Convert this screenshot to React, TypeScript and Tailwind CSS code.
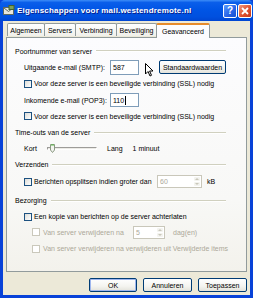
import React from "react";

const Check = ({ disabled = false }: { disabled?: boolean }) => (
  <div
    className={
      disabled
        ? "w-[8px] h-[8px] border border-[#CAC8BB] bg-white shrink-0"
        : "w-[8px] h-[8px] border border-[#1C5180] bg-[linear-gradient(135deg,#DCDCD7,#FFFFFF)] shrink-0"
    }
  />
);

const GroupHeader = ({ label, h }: { label: string; h: string }) => (
  <div className={`flex items-center ${h}`}>
    <span className="text-black whitespace-nowrap">{label}</span>
    <div className="flex-1 ml-[4px] h-[2px] border-t border-[#D0D0BF] border-b-white border-b" />
  </div>
);

const Btn = ({ label, w, def = false }: { label: string; w: string; def?: boolean }) => (
  <div
    className={`${w} h-[14px] rounded-[2px] border border-[#003C74] bg-[linear-gradient(to_bottom,#FFFFFF,#F4F4F0_60%,#E3E2DA)] flex items-center justify-center ${
      def ? "shadow-[inset_0_0_0_1px_#9EB6EE]" : ""
    }`}
  >
    <span className="text-black">{label}</span>
  </div>
);

const Spinner = ({ value, w }: { value: string; w: string }) => (
  <div className={`${w} h-[13px] border border-[#C9C7BA] bg-white flex items-center`}>
    <span className="flex-1 pl-[2px] text-[#ACA899]">{value}</span>
    <div className="w-[8px] h-full flex flex-col gap-px p-px">
      <div className="flex-1 bg-[#F3F3EF] rounded-[1px] flex items-center justify-center">
        <svg width="4" height="2" viewBox="0 0 4 2"><path d="M0 2 L2 0 L4 2Z" fill="#C9C7BA" /></svg>
      </div>
      <div className="flex-1 bg-[#F3F3EF] rounded-[1px] flex items-center justify-center">
        <svg width="4" height="2" viewBox="0 0 4 2"><path d="M0 0 L2 2 L4 0Z" fill="#C9C7BA" /></svg>
      </div>
    </div>
  </div>
);

export default function App() {
  return (
    <div className="w-[253px] h-[298px] bg-[#0842D8] flex flex-col overflow-hidden font-['Liberation_Sans',Arial,sans-serif] text-[7px] leading-[9px] relative">
      {/* Title bar */}
      <div className="h-[21px] shrink-0 flex items-center pl-[3px] pr-[1px] bg-[linear-gradient(to_bottom,#3D8DF7_0%,#0A5EEA_12%,#0055E5_45%,#0050DF_80%,#0046D2_100%)] rounded-t-[5px]">
        <svg width="12" height="11" viewBox="0 0 12 11" className="shrink-0">
          <rect x="0.5" y="2.5" width="10" height="7" fill="#E9E7DC" stroke="#5E6A60" />
          <path d="M1 3 L5.5 6.5 L10 3" fill="none" stroke="#5E6A60" />
          <rect x="6" y="0.5" width="5" height="4" fill="#7AA05A" stroke="#44632E" />
        </svg>
        <span className="ml-[2px] text-white font-bold text-[8px] leading-[10px] tracking-[0.18px] whitespace-nowrap [text-shadow:1px_1px_0_#0A1E8C]">
          Eigenschappen voor mail.westendremote.nl
        </span>
        <div className="flex-1" />
        <div className="w-[14px] h-[14px] rounded-[2px] border border-white bg-[linear-gradient(135deg,#5A9BFF,#2663E6_60%,#1A4FD0)] flex items-center justify-center">
          <span className="text-white font-bold text-[10px] leading-[10px]">?</span>
        </div>
        <div className="w-[14px] h-[14px] ml-px rounded-[2px] border border-white bg-[linear-gradient(135deg,#F09A7E,#E0512E_55%,#C53A1B)] flex items-center justify-center">
          <svg width="8" height="8" viewBox="0 0 8 8"><path d="M1 1 L7 7 M7 1 L1 7" stroke="white" strokeWidth="1.8" /></svg>
        </div>
      </div>

      {/* Body */}
      <div className="flex-1 mx-[3px] mb-[4px] bg-[#ECE9D8] flex flex-col px-[3px] pt-px pb-[3px]">
        {/* Tabs */}
        <div className="h-[15px] flex items-end pl-px relative z-10">
          {[
            ["Algemeen", "w-[38px]"],
            ["Servers", "w-[32px]"],
            ["Verbinding", "w-[42px]"],
            ["Beveiliging", "w-[41px]"],
          ].map(([t, w]) => (
            <div
              key={t}
              className={`${w} h-[13px] mb-px border border-b-0 border-[#919B9C] rounded-t-[2px] bg-[linear-gradient(to_bottom,#FFFFFF,#F0F0EA)] flex items-center justify-center mr-[-1px]`}
            >
              <span className="text-black">{t}</span>
            </div>
          ))}
          <div className="w-[54px] h-[15px] -mb-px border border-b-0 border-[#919B9C] border-t-[2px] border-t-[#E68B2C] rounded-t-[2px] bg-[#FCFCFE] flex items-center justify-center">
            <span className="text-black">Geavanceerd</span>
          </div>
        </div>

        {/* Panel */}
        <div className="h-[235px] shrink-0 border border-[#919B9C] bg-[linear-gradient(to_bottom,#FCFCFE,#F8F8F6_70%,#F3F2EC)] flex flex-col pt-[5px] pl-[8px] pr-[20px]">
          <GroupHeader label="Poortnummer van server" h="h-[16px]" />
          <div className="h-[16px] flex items-center pl-[9px]">
            <span className="w-[86px] text-black">Uitgaande e-mail (SMTP):</span>
            <div className="w-[29px] h-[15px] border border-[#7F9DB9] bg-white flex items-center pl-[2px]">
              <span className="text-black">587</span>
            </div>
            <div className="flex-1" />
            <Btn label="Standaardwaarden" w="w-[67px]" />
          </div>
          <div className="h-[17px] flex items-center pl-[9px] gap-[2px]">
            <Check />
            <span className="text-black whitespace-nowrap">Voor deze server is een beveiligde verbinding (SSL) nodig</span>
          </div>
          <div className="h-[16px] flex items-center pl-[9px]">
            <span className="w-[86px] text-black">Inkomende e-mail (POP3):</span>
            <div className="w-[29px] h-[14px] border border-[#7F9DB9] bg-white flex items-center pl-[2px]">
              <span className="text-black">110</span>
              <div className="w-px h-[9px] bg-black ml-px" />
            </div>
          </div>
          <div className="h-[16px] flex items-center pl-[9px] gap-[2px]">
            <Check />
            <span className="text-black whitespace-nowrap">Voor deze server is een beveiligde verbinding (SSL) nodig</span>
          </div>
          <GroupHeader label="Time-outs van de server" h="h-[17px]" />
          <div className="h-[15px] flex items-center pl-[9px]">
            <span className="w-[23px] text-black">Kort</span>
            <div className="w-[50px] h-[10px] relative flex items-center">
              <div className="w-full h-[3px] border border-[#9D9C99] border-b-white border-r-white bg-[#ECEBE6]" />
              <div className="absolute left-[3px] top-0 w-[5px] h-[9px]">
                <svg width="5" height="9" viewBox="0 0 5 9">
                  <path d="M0.5 0.5 H4.5 V6 L2.5 8.5 L0.5 6 Z" fill="#F4F4F0" stroke="#8A9A82" />
                  <path d="M1 1 H4" stroke="#5DBA4C" />
                </svg>
              </div>
            </div>
            <span className="ml-[10px] text-black">Lang</span>
            <span className="ml-[10px] text-black">1 minuut</span>
          </div>
          <GroupHeader label="Verzenden" h="h-[17px]" />
          <div className="h-[17px] flex items-center pl-[9px]">
            <Check />
            <span className="ml-[2px] w-[123px] text-black whitespace-nowrap">Berichten opsplitsen indien groter dan</span>
            <Spinner value="60" w="w-[45px]" />
            <span className="ml-[5px] text-black">kB</span>
          </div>
          <GroupHeader label="Bezorging" h="h-[21px]" />
          <div className="h-[11px] flex items-center pl-[9px] gap-[2px]">
            <Check />
            <span className="text-black whitespace-nowrap">Een kopie van berichten op de server achterlaten</span>
          </div>
          <div className="h-[20px] flex items-center pl-[17px]">
            <Check disabled />
            <span className="ml-[3px] w-[90px] text-[#ACA899] whitespace-nowrap">Van server verwijderen na</span>
            <Spinner value="5" w="w-[32px]" />
            <span className="ml-[8px] text-[#ACA899]">dag(en)</span>
          </div>
          <div className="h-[13px] flex items-center pl-[17px]">
            <Check disabled />
            <span className="ml-[3px] text-[#ACA899] whitespace-nowrap">Van server verwijderen na verwijderen uit Verwijderde items</span>
          </div>
        </div>

        {/* Buttons */}
        <div className="mt-[6px] flex justify-end gap-[6px] pr-0">
          <Btn label="OK" w="w-[48px]" def />
          <Btn label="Annuleren" w="w-[49px]" />
          <Btn label="Toepassen" w="w-[49px]" />
        </div>
      </div>

      {/* Mouse pointer */}
      <svg className="absolute left-[145px] top-[63px]" width="9" height="14" viewBox="0 0 9 14">
        <path d="M0.5 0.5 V11 L3 8.5 L5 13 L6.5 12.3 L4.6 8 H8 Z" fill="white" stroke="black" strokeWidth="1" strokeLinejoin="round" />
      </svg>
    </div>
  );
}
